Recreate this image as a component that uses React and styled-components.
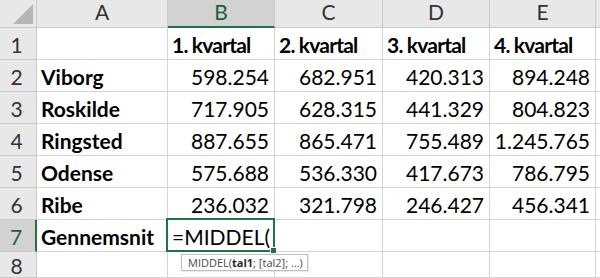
import React from 'react';
import styled, { createGlobalStyle } from 'styled-components';

const GlobalStyle = createGlobalStyle`
  html, body {
    margin: 0;
    padding: 0;
    background: #ffffff;
    overflow: hidden;
  }
`;

const GREEN = '#217346';

const Sheet = styled.div`
  display: grid;
  grid-template-columns: 37px 131px 107px 108px 107px 106px 1fr;
  grid-template-rows: 28px repeat(7, 32px) 26px;
  width: 600px;
  height: 278px;
  overflow: hidden;
  font-family: Lato, 'Liberation Sans', sans-serif;
  font-size: 21px;
  line-height: 24px;
  color: #000;
`;

const HeaderBase = styled.div`
  box-sizing: border-box;
  display: flex;
  align-items: flex-start;
  justify-content: center;
  padding-top: 5px;
  border-right: 1px solid #cacaca;
  border-bottom: 1px solid #cacaca;
  background: #e8e8e8;
  color: #333;
`;

const Corner = styled(HeaderBase)`
  align-items: center;
  justify-content: flex-end;
  padding: 0 2px 0 0;
`;

const ColHeader = styled(HeaderBase)`
  padding-top: 0;
  background: ${(p) => (p.$selected ? '#d2d2d2' : '#e8e8e8')};
  color: ${(p) => (p.$selected ? '#1d5e3a' : '#333')};
  border-bottom: ${(p) => (p.$selected ? `2px solid ${GREEN}` : '1px solid #cacaca')};
`;

const RowHeader = styled(HeaderBase)`
  padding-right: 3px;
  padding-top: ${(p) => (p.$last ? '2px' : '5px')};
  background: ${(p) => (p.$selected ? '#d2d2d2' : '#e8e8e8')};
  color: ${(p) => (p.$selected ? '#1d5e3a' : '#333')};
  border-right: ${(p) => (p.$selected ? `2px solid ${GREEN}` : '1px solid #cacaca')};
`;

const Cell = styled.div`
  position: relative;
  box-sizing: border-box;
  display: flex;
  align-items: flex-start;
  justify-content: ${(p) => (p.$align === 'right' ? 'flex-end' : 'flex-start')};
  padding: 5px 5px 0 4px;
  border-right: 1px solid #d4d4d4;
  border-bottom: 1px solid #d4d4d4;
  font-weight: ${(p) => (p.$bold ? 700 : 400)};
  letter-spacing: ${(p) => (p.$heading ? '-0.8px' : 'normal')};
  white-space: nowrap;
  z-index: ${(p) => (p.$active ? 2 : 0)};
`;

const ActiveFrame = styled.div`
  position: absolute;
  left: -2px;
  top: -2px;
  right: -1px;
  bottom: -1px;
  border: 2px solid ${GREEN};
  pointer-events: none;
`;

const FillHandle = styled.div`
  position: absolute;
  right: -4px;
  bottom: -4px;
  width: 5px;
  height: 5px;
  background: ${GREEN};
  border: 1px solid #fff;
`;

const Caret = styled.span`
  display: inline-block;
  width: 1px;
  height: 26px;
  margin-left: 1px;
  margin-top: -1px;
  background: #000;
`;

const Tooltip = styled.div`
  position: absolute;
  left: 13px;
  top: 34px;
  height: 17px;
  box-sizing: border-box;
  display: flex;
  align-items: center;
  padding: 0 4px 0 6px;
  background: #fff;
  border: 1px solid #c0c0c0;
  box-shadow: 1px 1px 1px rgba(0, 0, 0, 0.08);
  font-family: 'Open Sans', 'Liberation Sans', sans-serif;
  font-size: 11px;
  line-height: 15px;
  font-weight: 400;
  letter-spacing: normal;
  color: #4a4a4a;
`;

const TipArg = styled.b`
  font-weight: 700;
  color: #2a2a2a;
`;

const columns = ['A', 'B', 'C', 'D', 'E', ''];

const rows = [
  ['', '1. kvartal', '2. kvartal', '3. kvartal', '4. kvartal'],
  ['Viborg', '598.254', '682.951', '420.313', '894.248'],
  ['Roskilde', '717.905', '628.315', '441.329', '804.823'],
  ['Ringsted', '887.655', '865.471', '755.489', '1.245.765'],
  ['Odense', '575.688', '536.330', '417.673', '786.795'],
  ['Ribe', '236.032', '321.798', '246.427', '456.341'],
];

const CornerMark = () => (
  <svg width="22" height="22" viewBox="0 0 22 22">
    <polygon points="21,1 21,21 1,21" fill="#b5b5b5" />
  </svg>
);

const App = () => (
  <>
    <GlobalStyle />
    <Sheet>
      <Corner>
        <CornerMark />
      </Corner>
      {columns.map((c) => (
        <ColHeader key={c || 'F'} $selected={c === 'B'}>{c}</ColHeader>
      ))}

      {rows.map((r, i) => (
        <React.Fragment key={i}>
          <RowHeader>{i + 1}</RowHeader>
          {r.map((v, j) => (
            <Cell
              key={j}
              $bold={i === 0 || j === 0}
              $heading={i === 0}
              $align={i > 0 && j > 0 ? 'right' : 'left'}
            >
              {v}
            </Cell>
          ))}
          <Cell />
        </React.Fragment>
      ))}

      <RowHeader $selected>7</RowHeader>
      <Cell $bold>Gennemsnit</Cell>
      <Cell $active>
        =MIDDEL(<Caret />
        <ActiveFrame>
          <FillHandle />
        </ActiveFrame>
        <Tooltip>
          MIDDEL(<TipArg>tal1</TipArg>; [tal2]; ...)
        </Tooltip>
      </Cell>
      <Cell />
      <Cell />
      <Cell />
      <Cell />

      <RowHeader $last>8</RowHeader>
      <Cell />
      <Cell />
      <Cell />
      <Cell />
      <Cell />
      <Cell />
    </Sheet>
  </>
);

export default App;
